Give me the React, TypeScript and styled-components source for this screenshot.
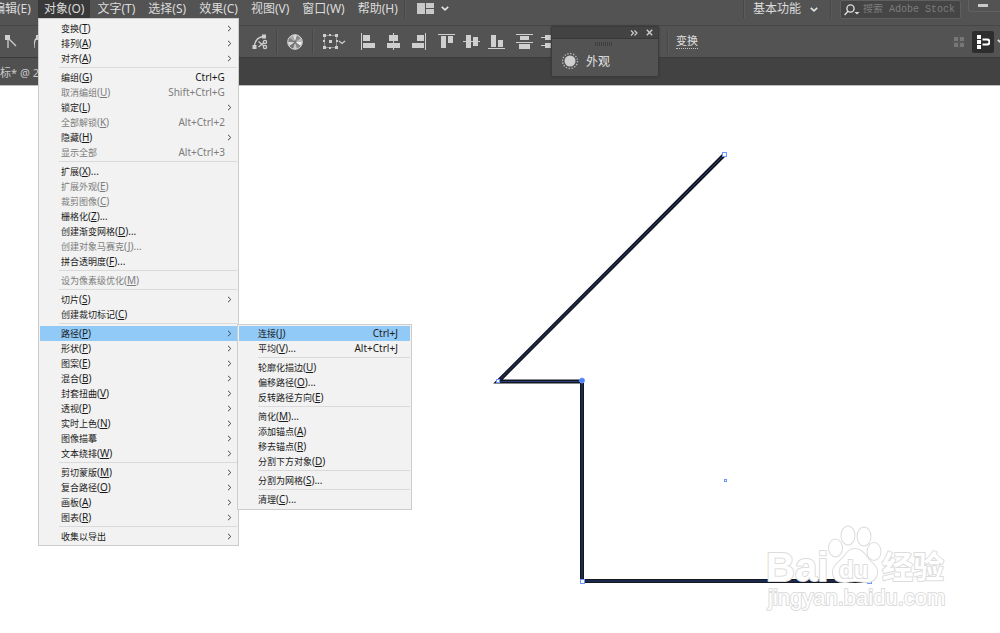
import React from 'react';
import styled, { createGlobalStyle, css } from 'styled-components';

const Global = createGlobalStyle`
  *, *::before, *::after { box-sizing: border-box; }
  body {
    margin: 0;
    background: #fff;
    font-family: "Noto Sans", "Noto Sans CJK SC", sans-serif;
    overflow: hidden;
  }
  button {
    font: inherit;
    color: inherit;
    border: 0;
    padding: 0;
    background: none;
  }
  u { text-underline-offset: 1px; }
`;

const Page = styled.div`
  display: flex;
  flex-direction: column;
  min-height: 100vh;
`;

const MenuBar = styled.header`
  display: flex;
  align-items: flex-start;
  height: 26px;
  background: #535353;
  border-bottom: 1px solid #464646;
  color: #dcdcdc;
  font-size: 12px;
  line-height: 18px;
`;

const MenuNav = styled.nav`
  display: flex;
  gap: 1px;
  margin-left: -13px;
`;

const MenuSlot = styled.div`
  position: relative;
`;

const MenuTitle = styled.button<{ $open?: boolean }>`
  height: 18px;
  padding: 0 6px;
  line-height: 18px;
  white-space: nowrap;
  background: ${(p) => (p.$open ? '#393939' : 'transparent')};
`;

const BarDivider = styled.span<{ $height?: number }>`
  flex: none;
  width: 1px;
  height: ${(p) => p.$height ?? 18}px;
  background: #474747;
  box-shadow: 1px 0 #5b5b5b;
`;

const LayoutButton = styled.button`
  display: flex;
  align-items: center;
  gap: 7px;
  height: 16px;
  margin-left: 12px;
`;

const Right = styled.div`
  display: flex;
  align-items: flex-start;
  margin-left: auto;
`;

const Workspace = styled.button`
  display: flex;
  align-items: center;
  gap: 9px;
  height: 18px;
  padding: 0 12px 0 9px;
`;

const Search = styled.label`
  display: flex;
  align-items: center;
  gap: 3px;
  width: 121px;
  height: 19px;
  margin-left: 9px;
  padding-left: 3px;
  background: #454545;
  border: 1px solid #5f5f5f;
  border-radius: 2px;
`;

const SearchInput = styled.input`
  flex: 1;
  min-width: 0;
  padding: 0;
  border: 0;
  background: none;
  color: #ddd;
  font: 10px "Liberation Mono", "Noto Sans CJK SC", monospace;
  &::placeholder { color: #7d7d7d; opacity: 1; }
`;

const WindowButton = styled.button`
  display: flex;
  align-items: center;
  justify-content: center;
  width: 32px;
  height: 12px;
  margin-left: 7px;
  padding-right: 4px;
  border: 1px solid #616161;
  border-top: 0;
  border-right: 0;
  border-radius: 0 0 0 3px;
`;

const Toolbar = styled.div`
  position: relative;
  display: flex;
  align-items: center;
  height: 32px;
  background: #535353;
  border-bottom: 1px solid #3a3a3a;
  color: #cfcfcf;
`;

const AnchorTools = styled.div`
  display: flex;
  gap: 8px;
  width: 244px;
`;

const ToolButton = styled.button<{ $width?: number; $pressed?: boolean }>`
  display: flex;
  flex: none;
  align-items: center;
  justify-content: center;
  width: ${(p) => p.$width ?? 25}px;
  height: 22px;
  border-radius: 2px;
  ${(p) => p.$pressed && css`
    background: #2d2d2d;
    color: #fff;
  `}
`;

const ButtonGroup = styled.div`
  display: flex;
  flex: none;
  margin-right: 3px;
`;

const TransformGroup = styled.div`
  display: flex;
  flex: none;
  align-items: center;
  gap: 8px;
  margin-left: 102px;
`;

const TransformLink = styled.button`
  border-bottom: 1px dotted #c8c8c8;
  color: #e0e0e0;
  font-size: 11px;
  line-height: 14px;
`;

const SnapGroup = styled.div`
  display: flex;
  gap: 2px;
  margin-left: auto;
  margin-right: -6px;
`;

const Panel = styled.aside`
  position: absolute;
  z-index: 2;
  top: 0;
  left: 551px;
  width: 108px;
  height: 51px;
  background: #535353;
  border: 1px solid #3b3b3b;
  border-radius: 2px;
  box-shadow: 0 0 2px #333;
`;

const PanelHead = styled.div`
  display: flex;
  align-items: center;
  justify-content: flex-end;
  gap: 8px;
  height: 12px;
  padding-right: 5px;
  background: #434343;
  border-bottom: 1px solid #383838;
`;

const PanelBody = styled.div`
  display: flex;
  flex-direction: column;
`;

const Grip = styled.div`
  width: 18px;
  height: 4px;
  margin: 3px 0 0 43px;
  background: repeating-linear-gradient(90deg, #3f3f3f 0 1px, #535353 1px 2px);
`;

const PanelButton = styled.button`
  display: flex;
  align-items: center;
  gap: 7px;
  height: 29px;
  padding: 0 0 0 9px;
  color: #e2e2e2;
  font-size: 12px;
`;

const TabBar = styled.div`
  display: flex;
  height: 28px;
  background: #424242;
  border-bottom: 1px solid #bdbdbd;
`;

const Tab = styled.button`
  width: 180px;
  background: #505050;
  color: #c9c9c9;
  font-size: 11px;
  text-align: left;
`;

const Artboard = styled.main`
  display: flex;
  flex: 1;
`;

const Drawing = styled.svg`
  flex: 1;
  display: block;
  width: 100%;
`;

const Popup = styled.div<{ $sub?: boolean }>`
  position: absolute;
  z-index: ${(p) => (p.$sub ? 6 : 5)};
  top: ${(p) => (p.$sub ? '-2px' : '18px')};
  left: ${(p) => (p.$sub ? '197px' : '0')};
  width: ${(p) => (p.$sub ? 175 : 201)}px;
  padding: ${(p) => (p.$sub ? '1px 1px 2px' : '2px 1px 1px')};
  background: #f2f2f2;
  border: 1px solid #cccccc;
  color: #1a1a1a;
  font-size: 9px;
  line-height: 15px;
`;

const Row = styled.div`
  position: relative;
`;

const Item = styled.button<{ $active?: boolean; $sub?: boolean }>`
  display: flex;
  align-items: center;
  width: 100%;
  height: 15px;
  padding: 0 5px 0 ${(p) => (p.$sub ? 19 : 21)}px;
  white-space: nowrap;
  text-align: left;
  background: ${(p) => (p.$active ? '#91c9f7' : 'transparent')};
  &:disabled { color: #7c7c7c; }
`;

const Mnemonic = styled.span`
  font-size: 10px;
`;

const Shortcut = styled.span`
  margin-left: auto;
  padding-right: 7px;
  font-size: 10px;
`;

const ArrowBox = styled.span`
  display: flex;
  margin-left: auto;
`;

const Rule = styled.div`
  height: 4px;
  margin-left: 19px;
  border-top: 1px solid transparent;
  &::after {
    content: "";
    display: block;
    height: 1px;
    background: #dadada;
  }
`;

type Entry = {
  label: string;
  key?: string;
  more?: boolean;
  shortcut?: string;
  sub?: boolean;
  off?: boolean;
  children?: Entry[][];
};

const pathMenu: Entry[][] = [
  [
    { label: '连接', key: 'J', shortcut: 'Ctrl+J' },
    { label: '平均', key: 'V', more: true, shortcut: 'Alt+Ctrl+J' },
  ],
  [
    { label: '轮廓化描边', key: 'U' },
    { label: '偏移路径', key: 'O', more: true },
    { label: '反转路径方向', key: 'E' },
  ],
  [
    { label: '简化', key: 'M', more: true },
    { label: '添加锚点', key: 'A' },
    { label: '移去锚点', key: 'R' },
    { label: '分割下方对象', key: 'D' },
  ],
  [{ label: '分割为网格', key: 'S', more: true }],
  [{ label: '清理', key: 'C', more: true }],
];

const objectMenu: Entry[][] = [
  [
    { label: '变换', key: 'T', sub: true },
    { label: '排列', key: 'A', sub: true },
    { label: '对齐', key: 'A', sub: true },
  ],
  [
    { label: '编组', key: 'G', shortcut: 'Ctrl+G' },
    { label: '取消编组', key: 'U', shortcut: 'Shift+Ctrl+G', off: true },
    { label: '锁定', key: 'L', sub: true },
    { label: '全部解锁', key: 'K', shortcut: 'Alt+Ctrl+2', off: true },
    { label: '隐藏', key: 'H', sub: true },
    { label: '显示全部', shortcut: 'Alt+Ctrl+3', off: true },
  ],
  [
    { label: '扩展', key: 'X', more: true },
    { label: '扩展外观', key: 'E', off: true },
    { label: '裁剪图像', key: 'C', off: true },
    { label: '栅格化', key: 'Z', more: true },
    { label: '创建渐变网格', key: 'D', more: true },
    { label: '创建对象马赛克', key: 'J', more: true, off: true },
    { label: '拼合透明度', key: 'F', more: true },
  ],
  [{ label: '设为像素级优化', key: 'M', off: true }],
  [
    { label: '切片', key: 'S', sub: true },
    { label: '创建裁切标记', key: 'C' },
  ],
  [
    { label: '路径', key: 'P', sub: true, children: pathMenu },
    { label: '形状', key: 'P', sub: true },
    { label: '图案', key: 'E', sub: true },
    { label: '混合', key: 'B', sub: true },
    { label: '封套扭曲', key: 'V', sub: true },
    { label: '透视', key: 'P', sub: true },
    { label: '实时上色', key: 'N', sub: true },
    { label: '图像描摹', sub: true },
    { label: '文本绕排', key: 'W', sub: true },
  ],
  [
    { label: '剪切蒙版', key: 'M', sub: true },
    { label: '复合路径', key: 'O', sub: true },
    { label: '画板', key: 'A', sub: true },
    { label: '图表', key: 'R', sub: true },
  ],
  [{ label: '收集以导出', sub: true }],
];

const Chevron = () => (
  <svg width="8" height="5" viewBox="0 0 8 5" fill="none" stroke="#e4e4e4" strokeWidth="1.6">
    <path d="M.8 .8 4 3.8 7.2 .8" />
  </svg>
);

function MenuList({ groups, sub, selected }: { groups: Entry[][]; sub?: boolean; selected: string }) {
  return (
    <Popup $sub={sub} role="menu">
      {groups.map((group, i) => (
        <React.Fragment key={i}>
          {i > 0 && <Rule />}
          {group.map((e) => (
            <Row key={e.label}>
              <Item role="menuitem" disabled={e.off} $active={e.label === selected} $sub={sub}>
                {e.label}
                {e.key && (
                  <Mnemonic>
                    (<u>{e.key}</u>){e.more && '...'}
                  </Mnemonic>
                )}
                {e.shortcut && <Shortcut>{e.shortcut}</Shortcut>}
                {e.sub && (
                  <ArrowBox>
                    <svg width="5" height="7" viewBox="0 0 5 7" fill="none" stroke="#444">
                      <path d="M1 .8 3.8 3.5 1 6.2" />
                    </svg>
                  </ArrowBox>
                )}
              </Item>
              {e.children && <MenuList groups={e.children} sub selected="连接" />}
            </Row>
          ))}
        </React.Fragment>
      ))}
    </Popup>
  );
}

const alignIcons: { name: string; line: string; boxes: number[][] }[][] = [
  [
    { name: '左对齐', line: 'M1.5 0V17', boxes: [[3, 2, 7, 6], [3, 10, 12, 5]] },
    { name: '水平居中', line: 'M8.5 0V17', boxes: [[4, 2, 9, 6], [2, 10, 13, 5]] },
    { name: '右对齐', line: 'M15.5 0V17', boxes: [[7, 2, 7, 6], [2, 10, 12, 5]] },
  ],
  [
    { name: '顶对齐', line: 'M0 1.5H17', boxes: [[3, 3, 5, 12], [10, 3, 5, 7]] },
    { name: '垂直居中', line: 'M0 8.5H17', boxes: [[3, 2, 5, 13], [10, 4, 5, 9]] },
    { name: '底对齐', line: 'M0 15.5H17', boxes: [[3, 2, 5, 12], [10, 7, 5, 7]] },
  ],
  [
    { name: '垂直分布', line: 'M0 1.5H17M0 9.5H17', boxes: [[4, 3, 9, 4], [3, 11, 11, 5]] },
    { name: '水平分布', line: 'M0 4.5H17M0 12.5H17', boxes: [[4, 2, 9, 5], [4, 10, 9, 5]] },
  ],
];

const globeColors = ['#eee', '#888', '#c8c8c8', '#777', '#d8d8d8', '#808080', '#aaa', '#ddd', '#8c8c8c', '#bbb'];

const globe = globeColors.map((fill, i) => {
  const a = (i / 10) * Math.PI * 2;
  const b = ((i + 1) / 10) * Math.PI * 2;
  const pt = (t: number) => `${(8 + 7 * Math.cos(t)).toFixed(2)} ${(8 + 7 * Math.sin(t)).toFixed(2)}`;
  return <path key={i} fill={fill} d={`M8 8L${pt(a)}A7 7 0 0 1 ${pt(b)}Z`} />;
});

const menuTitles = ['文字(T)', '选择(S)', '效果(C)', '视图(V)', '窗口(W)', '帮助(H)'];

export default function App() {
  return (
    <Page>
      <Global />
      <MenuBar>
        <MenuNav>
          <MenuTitle>编辑(E)</MenuTitle>
          <MenuSlot>
            <MenuTitle $open>对象(O)</MenuTitle>
            <MenuList groups={objectMenu} selected="路径" />
          </MenuSlot>
          {menuTitles.map((t) => (
            <MenuTitle key={t}>{t}</MenuTitle>
          ))}
        </MenuNav>
        <BarDivider />
        <LayoutButton aria-label="排列文档">
          <svg width="17" height="11" viewBox="0 0 17 11" fill="#c9c9c9">
            <path d="M0 0h8v11H0zM9 0h8v5H9zM9 6h8v5H9z" />
          </svg>
          <Chevron />
        </LayoutButton>
        <Right>
          <BarDivider />
          <Workspace>
            基本功能
            <Chevron />
          </Workspace>
          <BarDivider />
          <Search>
            <svg width="16" height="12" viewBox="0 0 16 12" fill="none" stroke="#ddd" strokeWidth="1.4">
              <circle cx="6.5" cy="4.5" r="3.6" />
              <path d="M4 7.2.6 11" />
              <path d="M10.500 8h5L13 10.500z" fill="#ddd" stroke="none" />
            </svg>
            <SearchInput aria-label="搜索" placeholder="搜索 Adobe Stock" />
          </Search>
          <WindowButton aria-label="最小化">
            <svg width="10" height="3"><rect width="10" height="3" fill="#c9c9c9" /></svg>
          </WindowButton>
        </Right>
      </MenuBar>

      <Toolbar>
        <AnchorTools>
          <ToolButton $width={22} aria-label="转换为尖角">
            <svg width="14" height="14" viewBox="0 0 14 14" fill="none" stroke="currentColor" strokeWidth="1.3">
              <path d="M4 3v10M4 3l8 8" />
              <path d="M1 0h5v5H1z" fill="currentColor" stroke="none" />
            </svg>
          </ToolButton>
          <ToolButton $width={22} aria-label="转换为平滑">
            <svg width="14" height="14" viewBox="0 0 14 14" fill="none" stroke="currentColor" strokeWidth="1.3">
              <path d="M0 13C0 7 1 3 4 2.500s6 3 9 10.500" />
              <path d="M2 0h5v5H2z" fill="currentColor" stroke="none" />
            </svg>
          </ToolButton>
        </AnchorTools>
        <ToolButton $width={32} aria-label="剪切路径">
          <svg width="16" height="16" viewBox="0 0 16 16" fill="none" stroke="currentColor" strokeWidth="1.3">
            <path d="M2.500 12C3 6 6 3 12 2.500" />
            <path d="M.5 11h4v4h-4zM10 .5h4v4h-4z" fill="currentColor" stroke="none" />
            <path d="M6.500 7.500 12 12M6.500 13 12 8.500" />
            <circle cx="13" cy="8" r="1.600" />
            <circle cx="13" cy="13" r="1.600" />
          </svg>
        </ToolButton>
        <BarDivider $height={24} />
        <ToolButton $width={35} aria-label="重新着色图稿">
          <svg width="16" height="16" viewBox="0 0 16 16">
            {globe}
            <circle cx="8" cy="8" r="7.300" fill="none" stroke="#ddd" />
            <circle cx="8" cy="8" r="1.500" fill="#777" />
          </svg>
        </ToolButton>
        <BarDivider $height={24} />
        <ToolButton $width={43} aria-label="对齐方式">
          <svg width="23" height="15" viewBox="0 0 23 15" fill="none" stroke="currentColor">
            <path d="M1.500 1.500h12v12h-12z" strokeDasharray="1 1" />
            <path d="M0 0h3v3H0zM6 0h2v2H6zM12 0h3v3h-3zM0 6h2v2H0zM6 6h3v3H6zM13 6h2v2h-2zM0 12h3v3H0zM6 13h2v2H6zM12 12h3v3h-3z" fill="currentColor" stroke="none" />
            <path d="M16 7l3 2.500L22 7" strokeWidth="1.300" />
          </svg>
        </ToolButton>
        {alignIcons.map((group, i) => (
          <ButtonGroup key={i}>
            {group.map((icon) => (
              <ToolButton key={icon.name} aria-label={icon.name}>
                <svg width="17" height="17" viewBox="0 0 17 17" fill="currentColor">
                  <path d={icon.line} stroke="currentColor" />
                  {icon.boxes.map(([x, y, w, h]) => (
                    <rect key={`${x}-${y}`} x={x} y={y} width={w} height={h} />
                  ))}
                </svg>
              </ToolButton>
            ))}
          </ButtonGroup>
        ))}
        <TransformGroup>
          <BarDivider $height={24} />
          <TransformLink>变换</TransformLink>
        </TransformGroup>
        <SnapGroup>
          <ToolButton $width={22} aria-label="对齐像素">
            <svg width="14" height="14" viewBox="0 0 14 14" fill="#777">
              <path d="M2 2h4v4H2zM8 2h4v4H8zM2 8h4v4H2zM8 8h4v4H8z" />
              <path d="M7 0v14M0 7h14" stroke="#666" strokeDasharray="1 1" />
            </svg>
          </ToolButton>
          <ToolButton $width={22} $pressed aria-label="对齐点">
            <svg width="14" height="14" viewBox="0 0 14 14" fill="currentColor">
              <path d="M1 0h4v4H1zM1 5h4v4H1zM1 10h4v4H1z" />
              <path d="M6.500 4.500H11a2.500 2.500 0 0 1 0 5H6.500" fill="none" stroke="currentColor" strokeWidth="2" />
            </svg>
          </ToolButton>
          <ToolButton $width={10} aria-label="更多">
            <Chevron />
          </ToolButton>
        </SnapGroup>

        <Panel>
          <PanelHead>
            <svg width="8" height="6" viewBox="0 0 8 6" fill="none" stroke="#ccc" strokeWidth="1.200">
              <path d="M1 .5 3.500 3 1 5.500M4.500 .5 7 3 4.500 5.500" />
            </svg>
            <svg width="7" height="7" viewBox="0 0 7 7" fill="none" stroke="#ccc" strokeWidth="1.400">
              <path d="M.8.8l5.400 5.400M6.200.8.8 6.200" />
            </svg>
          </PanelHead>
          <PanelBody>
            <Grip />
            <PanelButton>
              <svg width="18" height="18" viewBox="0 0 18 18">
                <circle cx="9" cy="9" r="5.500" fill="#cfcfcf" />
                <circle cx="9" cy="9" r="7.500" fill="none" stroke="#bbb" strokeWidth="1.400" strokeDasharray="1.300 1.645" />
              </svg>
              外观
            </PanelButton>
          </PanelBody>
        </Panel>
      </Toolbar>

      <TabBar>
        <Tab>标* @ 2</Tab>
      </TabBar>

      <Artboard>
        <Drawing>
          <g transform="translate(0 -86)">
            <g fill="none" strokeLinejoin="miter">
              <path d="M724 155 498 381.500H582V581H870" stroke="#15171f" strokeWidth="4" />
              <path d="M724 155 498 381.500H582V581H870" stroke="#243c80" strokeWidth="1" />
            </g>
            <g fill="#fff" stroke="#6f96ff">
              <rect x="722.500" y="152.500" width="4" height="4" />
              <rect x="496.500" y="379.500" width="3" height="3" />
              <rect x="580.500" y="579.500" width="4" height="4" />
              <rect x="867.500" y="579.500" width="4" height="4" />
              <rect x="724.500" y="479.500" width="2" height="2" />
              <circle cx="582" cy="380.500" r="2.500" fill="#4a80ff" />
            </g>
            <g
              fill="#fff"
              stroke="#dcdcdc"
              strokeWidth="2"
              paintOrder="stroke"
              strokeLinejoin="round"
              fontFamily='"Liberation Sans", "Noto Sans CJK SC", sans-serif'
              fontWeight="700"
            >
              <ellipse cx="835.500" cy="548" rx="6.500" ry="8.500" />
              <ellipse cx="848" cy="535.500" rx="6.500" ry="9" />
              <ellipse cx="864" cy="536.500" rx="6.500" ry="9" />
              <ellipse cx="874" cy="551.500" rx="6.500" ry="8.500" />
              <path d="M855 549c-7 0-9 6-13 10-5 5-10 8-9 15 1 6 6 8 11 8 4 0 7-1 11-1s7 1 11 1c6 0 10-3 11-8 1-7-4-10-8-14-4-5-7-11-14-11z" />
              <text x="766" y="581" fontSize="40">Bai</text>
              <text x="839" y="578" fontSize="24">du</text>
              <text x="882" y="578" fontSize="31">经验</text>
              <text x="768" y="605" fontSize="22" fontWeight="400">jingyan.baidu.com</text>
            </g>
          </g>
        </Drawing>
      </Artboard>
    </Page>
  );
}
